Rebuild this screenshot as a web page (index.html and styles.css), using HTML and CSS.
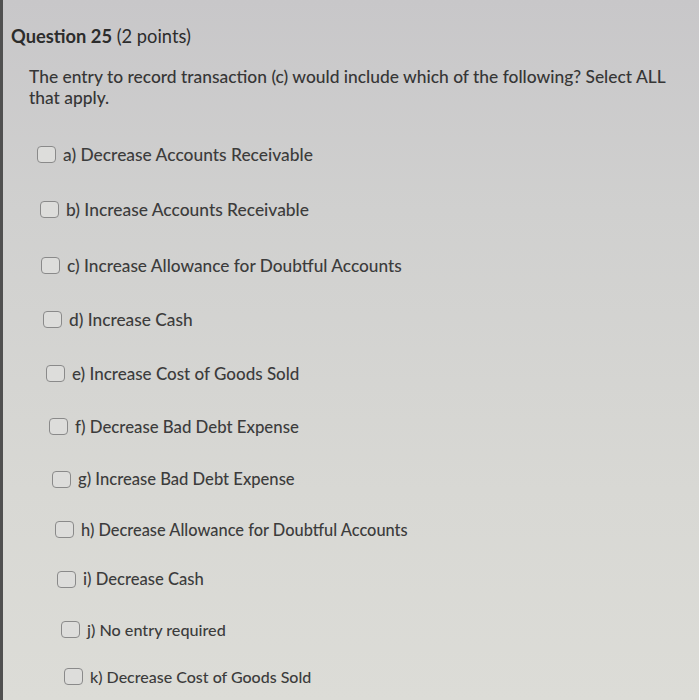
FILE: index.html
```html
<!DOCTYPE html>
<html>
<head>
<meta charset="utf-8">
<link rel="stylesheet" href="styles.css">
</head>
<body>
<div class="page">
  <h1 class="title"><span class="title-main">Question 25</span> (2 points)</h1>
  <p class="prompt">The entry to record transaction (c) would include which of the following? Select ALL that apply.</p>
  <ul class="options">
    <li class="option"><span class="box"></span><span class="label">a) Decrease Accounts Receivable</span></li>
    <li class="option"><span class="box"></span><span class="label">b) Increase Accounts Receivable</span></li>
    <li class="option"><span class="box"></span><span class="label">c) Increase Allowance for Doubtful Accounts</span></li>
    <li class="option"><span class="box"></span><span class="label">d) Increase Cash</span></li>
    <li class="option"><span class="box"></span><span class="label">e) Increase Cost of Goods Sold</span></li>
    <li class="option"><span class="box"></span><span class="label">f) Decrease Bad Debt Expense</span></li>
    <li class="option"><span class="box"></span><span class="label">g) Increase Bad Debt Expense</span></li>
    <li class="option"><span class="box"></span><span class="label">h) Decrease Allowance for Doubtful Accounts</span></li>
    <li class="option"><span class="box"></span><span class="label">i) Decrease Cash</span></li>
    <li class="option"><span class="box"></span><span class="label">j) No entry required</span></li>
    <li class="option"><span class="box"></span><span class="label">k) Decrease Cost of Goods Sold</span></li>
  </ul>
</div>
</body>
</html>
```
FILE: styles.css
```css
html, body {
  margin: 0;
  padding: 0;
  height: 100%;
}
body {
  background: linear-gradient(180deg, #c8c7c9 0%, #d0d0cf 30%, #d8d8d4 70%, #dcdcd7 100%);
  font-family: Lato, "Open Sans", sans-serif;
  color: #3b3b3b;
  overflow: hidden;
}
.page {
  border-left: 3px solid #505050;
  min-height: 700px;
  box-sizing: border-box;
  padding: 24px 0 0 8px;
}
.title {
  margin: 0;
  font-size: 18.3px;
  font-weight: 400;
  line-height: 24px;
  color: #2c2c2c;
}
.title-main {
  font-weight: 700;
}
.prompt {
  margin: 18px 0 0 18px;
  width: 660px;
  font-size: 17.4px;
  line-height: 21px;
  font-weight: 500;
  color: #363636;
}
.options {
  list-style: none;
  margin: 0;
  padding: 0;
}
.option {
  display: flex;
  align-items: center;
  gap: 7px;
  height: 22px;
  font-size: 17.4px;
  font-weight: 500;
  color: #3c3c3c;
}
.box {
  width: 17px;
  height: 15px;
  border: 1px solid #8a8a8a;
  border-radius: 4px;
  background: #dddddb;
  flex: none;
}
.option:nth-child(1) { margin-top: 35px; padding-left: 26px; }
.option:nth-child(2) { margin-top: 33px; padding-left: 29px; }
.option:nth-child(3) { margin-top: 34px; padding-left: 30px; font-size: 17.25px; }
.option:nth-child(4) { margin-top: 32px; padding-left: 32px; font-size: 17.3px; }
.option:nth-child(5) { margin-top: 32px; padding-left: 35px; font-size: 17px; }
.option:nth-child(6) { margin-top: 31px; padding-left: 38px; font-size: 16.8px; }
.option:nth-child(7) { margin-top: 31px; padding-left: 41px; font-size: 16.6px; }
.option:nth-child(8) { margin-top: 28px; padding-left: 44px; font-size: 16.4px; }
.option:nth-child(9) { margin-top: 28px; padding-left: 46px; font-size: 16.6px; }
.option:nth-child(10) { margin-top: 28px; padding-left: 50px; font-size: 16.2px; }
.option:nth-child(11) { margin-top: 25px; padding-left: 53px; font-size: 16px; }
```
